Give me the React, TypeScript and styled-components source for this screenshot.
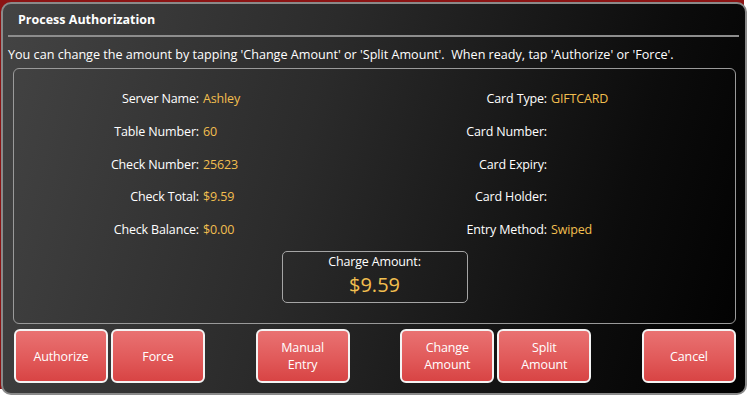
import React from "react";
import styled, { createGlobalStyle } from "styled-components";

const Global = createGlobalStyle`
  html, body { margin: 0; padding: 0; background: #ffffff; }
  body { font-family: "Open Sans", "Noto Sans", sans-serif; }
`;

const Page = styled.div`
  width: 752px;
  height: 401px;
  background: #ffffff;
  overflow: hidden;
`;

const Backdrop = styled.div`
  padding: 2px 0 0 1px;
  width: 743px;
  height: 387px;
  background: #8b1414;
`;

const Dialog = styled.div`
  box-sizing: border-box;
  width: 746px;
  height: 393px;
  border: 2px solid #8a8a8a;
  border-radius: 10px;
  background: linear-gradient(105deg, #444444 0%, #2b2b2b 40%, #0c0c0c 80%, #000000 100%);
  display: flex;
  flex-direction: column;
  padding: 0 9px 0 10px;
  overflow: hidden;
`;

const TitleBar = styled.div`
  height: 31px;
  display: flex;
  align-items: center;
  padding-left: 10px;
  margin: 0 -3px 0 -5px;
  border-bottom: 2px solid #8d8d8d;
  color: #ffffff;
  font-weight: 700;
  font-size: 12.5px;
`;

const Instruction = styled.div`
  color: #ffffff;
  font-size: 12.6px;
  line-height: 17px;
  margin: 9px 0 5px -5px;
  white-space: nowrap;
`;

const Panel = styled.div`
  box-sizing: border-box;
  height: 256px;
  border: 1px solid #9a9a9a;
  border-radius: 6px;
  padding: 14px 0 0 0;
  display: flex;
  flex-direction: column;
  align-items: stretch;
`;

const InfoGrid = styled.div`
  display: grid;
  grid-template-columns: 185px 194px 146px 1fr;
  column-gap: 4px;
  grid-auto-rows: 32.75px;
`;

const Label = styled.div`
  color: #ffffff;
  font-size: 12.5px;
  text-align: right;
  line-height: 32.75px;
  white-space: nowrap;
  letter-spacing: -0.15px;
`;

const Value = styled.div`
  color: #f2bf4f;
  font-size: 12.5px;
  line-height: 32.75px;
  white-space: nowrap;
  letter-spacing: -0.15px;
`;

const ChargeBox = styled.div`
  box-sizing: border-box;
  align-self: center;
  width: 186px;
  height: 52px;
  margin-top: 4px;
  border: 1px solid #a5a5a5;
  border-radius: 5px;
  display: flex;
  flex-direction: column;
  align-items: center;
  padding-top: 1px;
`;

const ChargeLabel = styled.div`
  color: #ffffff;
  font-size: 12.5px;
  line-height: 18px;
  letter-spacing: -0.15px;
`;

const ChargeValue = styled.div`
  color: #f2bf4f;
  font-size: 20px;
  line-height: 28px;
`;

const ButtonRow = styled.div`
  display: flex;
  justify-content: space-between;
  margin-top: 5px;
  padding: 0 0 0 1px;
`;

const ButtonGroup = styled.div`
  display: flex;
  gap: 3px;
`;

const Button = styled.button`
  box-sizing: border-box;
  width: 94px;
  height: 54px;
  border: 2px solid #f4f4f4;
  border-radius: 6px;
  background: linear-gradient(180deg, #e97272 0%, #e15a5a 55%, #d84444 100%);
  color: #ffffff;
  font-family: "Open Sans", "Noto Sans", sans-serif;
  font-size: 12.5px;
  line-height: 17px;
  letter-spacing: -0.15px;
  padding: 0 4px;
  cursor: pointer;
`;

const rows: [string, string, string, string][] = [
  ["Server Name:", "Ashley", "Card Type:", "GIFTCARD"],
  ["Table Number:", "60", "Card Number:", ""],
  ["Check Number:", "25623", "Card Expiry:", ""],
  ["Check Total:", "$9.59", "Card Holder:", ""],
  ["Check Balance:", "$0.00", "Entry Method:", "Swiped"],
];

export default function App() {
  return (
    <Page>
      <Global />
      <Backdrop>
        <Dialog>
          <TitleBar>Process Authorization</TitleBar>
          <Instruction>
            You can change the amount by tapping 'Change Amount' or 'Split Amount'.&nbsp; When ready, tap 'Authorize' or 'Force'.
          </Instruction>
          <Panel>
            <InfoGrid>
              {rows.map((r) => (
                <React.Fragment key={r[0]}>
                  <Label>{r[0]}</Label>
                  <Value>{r[1]}</Value>
                  <Label>{r[2]}</Label>
                  <Value>{r[3]}</Value>
                </React.Fragment>
              ))}
            </InfoGrid>
            <ChargeBox>
              <ChargeLabel>Charge Amount:</ChargeLabel>
              <ChargeValue>$9.59</ChargeValue>
            </ChargeBox>
          </Panel>
          <ButtonRow>
            <ButtonGroup>
              <Button>Authorize</Button>
              <Button>Force</Button>
            </ButtonGroup>
            <ButtonGroup>
              <Button>Manual<br />Entry</Button>
            </ButtonGroup>
            <ButtonGroup>
              <Button>Change<br />Amount</Button>
              <Button>Split<br />Amount</Button>
            </ButtonGroup>
            <ButtonGroup>
              <Button>Cancel</Button>
            </ButtonGroup>
          </ButtonRow>
        </Dialog>
      </Backdrop>
    </Page>
  );
}
